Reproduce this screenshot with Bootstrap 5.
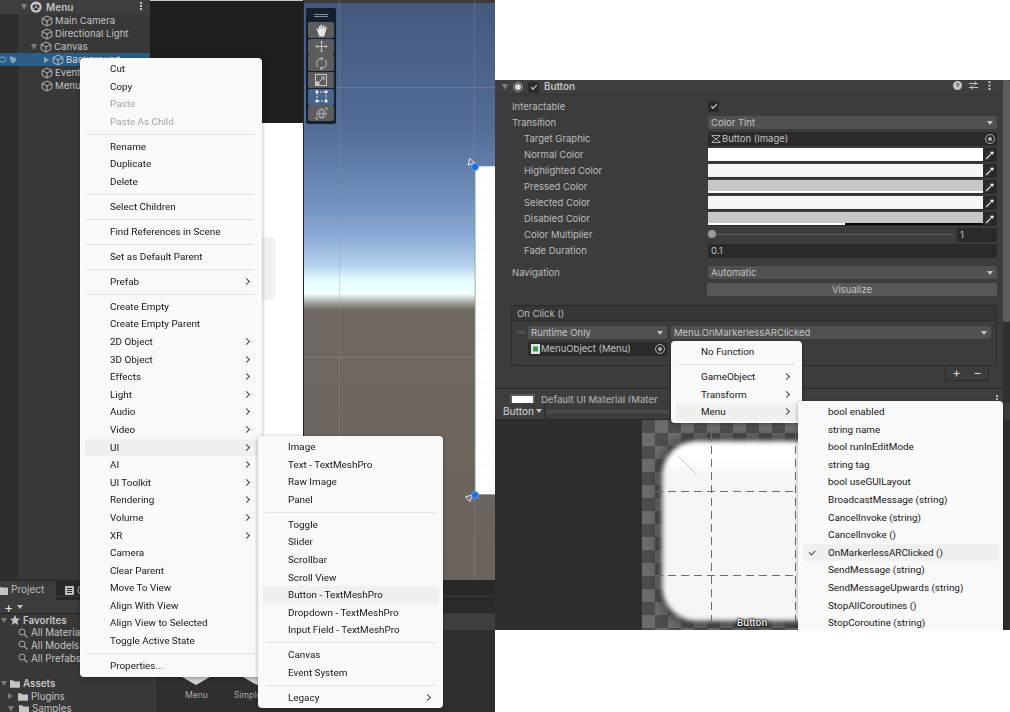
<!DOCTYPE html>
<html lang="en">
<head>
<meta charset="utf-8">
<title>Unity editor menus</title>
<link href="https://cdn.jsdelivr.net/npm/bootstrap@5.3.0/dist/css/bootstrap.min.css" rel="stylesheet">
<style>
html,body{margin:0;background:#fff;overflow:hidden}
.shot{width:1010px;height:712px;align-items:flex-start;filter:blur(.3px)}
.lpane{width:495px;height:712px;position:relative;overflow:hidden;background:#282828;font:9.6px/13px Inter,"Liberation Sans",sans-serif;color:#c4c4c4;flex:none}
.rpane{width:515px;height:550px;margin-top:80px;position:relative;overflow:hidden;background:#3c3c3c;font:9.5px/16px Inter,"Liberation Sans",sans-serif;color:#bdbdbd;flex:none}
.topzone{height:580px}
.hier{width:150px;background:linear-gradient(90deg,#2e2e2e 18px,#383838 18px);flex:none}
.hrow{height:13px;white-space:nowrap;align-items:center;display:flex}
.hrow svg{flex:none}
.hroot{height:14px;background:#3e3e3e;font-weight:600;padding-left:21px;position:relative;font-size:10px}
.hd1{padding-left:41px}.hcanvas{padding-left:31px}
.hsel{background:#2c5d87;color:#d8d8d8;padding-left:44px;position:relative}
.arr{width:0;height:0;border-left:3.5px solid transparent;border-right:3.5px solid transparent;border-top:6px solid #7b7b7b;margin-right:3px;flex:none}
.arrr{width:0;height:0;border-top:3.5px solid transparent;border-bottom:3.5px solid transparent;border-left:5px solid #8da3b5;margin-right:3px;flex:none}
.ic{width:12px;height:12px;margin-right:2px}
.kebab{position:absolute;right:8px;top:2px;width:2px;height:2px;background:#c4c4c4;box-shadow:0 3px #c4c4c4,0 6px #c4c4c4}
.eyeico{position:absolute;left:0;top:1px}
.gamecol{width:153px;flex:none;background:#fff}
.gamedark{height:123px;background:#1f1f1f;border-top:1px solid #c9c9c9}
.gamebody{height:457px;position:relative;background:#fff}
.ghost{position:absolute;left:112px;top:114px;width:13px;height:63px;background:#f2f2f2}
.scene{flex:1;position:relative;overflow:hidden;border-left:1px solid #222;background:linear-gradient(180deg,#43597e 0,#536d97 130px,#6f8fbc 200px,#8aa9d6 235px,#b5d1ee 265px,#e4fbff 280px,#f2ffff 294px,#a9a9a5 302px,#6f6761 310px,#6b635d 580px)}
.hline{position:absolute;left:0;right:0;height:1px;background:rgba(150,150,150,.4)}
.vline{position:absolute;top:0;bottom:0;width:1px;background:rgba(150,150,150,.3)}
.hl1{top:87px}.hl2{top:222px}.hl3{top:357px}.vl1{left:35px}.vl2{left:170px}
.topstrip{position:absolute;left:0;right:0;top:0;height:3px;background:#3a3a3a}
.canvasrect{position:absolute;left:171px;top:166px;width:30px;height:329px;background:#fff;border-left:1px solid #b5d9b0;border-top:1px solid #cfe6cc;border-bottom:1px solid #9c9c9c;background-image:linear-gradient(#f6f6f6 1px,transparent 1px);background-size:100% 13.5px}
.dot{position:absolute;width:8px;height:8px;border-radius:50%;background:#1c6fe0;border:1px solid #5fa2f4}
.dot1{left:167px;top:163px}.dot2{left:167px;top:491px}
.pin{position:absolute;width:8px;height:8px}
.pin1{left:163px;top:158px}.pin2{left:161px;top:494px}
.tbar{position:absolute;left:2px;top:8px;width:30px;height:116px;background:#142030;border-radius:2px;padding:3px 2px 0}
.tgrip{height:10px;position:relative;margin:0 0 1px}
.tgrip::before{content:"";position:absolute;left:6px;right:6px;top:3px;height:3px;border-top:1px solid #8a8f96;border-bottom:1px solid #8a8f96}
.tbtn{height:16px;margin-bottom:.7px;background:#5c5c5c;border-radius:2px;display:flex;align-items:center;justify-content:center}
.tbtn.on{background:#45658a}
.proj{height:132px}
.ptabs{height:20px;background:linear-gradient(180deg,#282828 16px,#3a3a3a 16px,#3a3a3a 17px,#282828 17px);align-items:flex-end}
.ptab{width:56px;height:19px;background:#3c3c3c;padding-left:11px;line-height:17px;position:relative;color:#bdbdbd;font-size:10px}
.ptab svg{position:absolute;left:-4px;top:4px}
.ptab2{margin-left:9px;height:19px;line-height:17px;display:flex;align-items:center;gap:3px;font-size:10px;color:#bdbdbd}
.ptool{height:13px;background:linear-gradient(90deg,#3c3c3c 158px,#2a2a2a 158px);line-height:12px;padding-left:4px;color:#e4e4e4;font-size:14px}
.pcaret{width:0;height:0;border-left:3px solid transparent;border-right:3px solid transparent;border-top:4px solid #c4c4c4;margin-left:4px}
.pbody{height:99px}
.ptree{width:158px;background:#383838;border-right:1px solid #262626;border-top:1px solid #262626;flex:none;overflow:hidden}
.tr{height:12.6px;display:flex;align-items:center;white-space:nowrap;font-size:9.8px}
.trh{padding-left:1px;font-weight:600}
.trc{padding-left:18px}
.trc svg,.trh svg{margin-right:3px;flex:none}
.trh .arr{margin-right:3px;border-left-width:3px;border-right-width:3px;border-top-width:5px}
.trc .arrr,.trc .arr{margin-left:-10px;margin-right:5px;flex:none}
.trc .arrr{border-left-color:#7b7b7b}
.trgap{height:13px}
.pfiles{flex:1;position:relative;background:#2f2f2f;overflow:hidden}
.pband{height:17px;background:#3e3e3e}
.thumb{position:absolute;top:64px;width:0;height:0;border-left:14px solid transparent;border-right:14px solid transparent;border-top:8px solid #d4d4d4}
.th1{left:24px}.th2{left:85px}
.tlabel{position:absolute;top:76px;font-size:8.600px;color:#a8a8a8}
.tl1{left:27px}.tl2{left:76px}
/* context menus */
.ctx{display:block;padding:2px 0;border:0;border-radius:4px;min-width:0;background:#f9f9f9;box-shadow:0 1px 4px rgba(0,0,0,.35);font:400 9.9px/17.6px Roboto,"Liberation Sans",sans-serif;color:#1e1e1e;overflow:hidden;isolation:isolate}
.ctx .dropdown-item{padding:0 30px;font-size:inherit;line-height:18.4px;height:17.6px;color:#161616;position:relative;white-space:nowrap;background:none}
.ctx .dropdown-item.dim{color:#a3a3a3}
.ctx .dropdown-item.hot::before{content:"";position:absolute;left:5px;right:4px;top:0;bottom:0;background:#f0f0f0;border-radius:3px;z-index:-1}
.ctx .dropdown-divider{margin:3.2px 7px;height:1px;opacity:1;border:0;background:#e3e3e3;box-shadow:0 0 1px #e3e3e3}
.sub::after{content:"";position:absolute;right:13px;top:6px;width:5px;height:5px;border-top:1px solid #444;border-right:1px solid #444;transform:rotate(45deg)}
.chk::after{content:"";position:absolute;left:11px;top:6px;width:6px;height:3.5px;border-left:1px solid #444;border-bottom:1px solid #444;transform:rotate(-45deg)}
.m1{left:80px;top:58px;width:182px;height:619px}
.m2{left:258px;top:436px;width:185px;height:272px}
.m3{left:176px;top:261px;width:131px;height:82px}
.m4{left:303px;top:321px;width:205px;height:240px}
/* inspector */
.ihead{height:15px;margin-bottom:1px;background:#3e3e3e;border-bottom:1px solid #333;display:flex;align-items:center;padding-left:7px;font-weight:600;color:#c4c4c4;position:relative;font-size:9.800px}
.ihead .arr{margin-right:5px}
.cbtn{width:11px;height:11px;background:#2a2a2a;border-radius:2px;margin:0 5px 0 5px;display:block}
.hbtns{position:absolute;right:16px;top:1px;display:flex;gap:7px;align-items:center}
.ibody{padding:2.5px 13px 0 17px}
.irow{height:16px;display:grid;grid-template-columns:196px 1fr;align-items:center}
.irow>.lbl{white-space:nowrap}
.in{padding-left:12px}
.irow.gp{margin-top:6px}
.irow.vz{margin-top:1px}
.pop{height:13px;background:#515151;border-radius:2px;line-height:13px;padding-left:3px;color:#c4c4c4;position:relative}
.pop::after{content:"";position:absolute;right:4px;top:5px;border-left:3px solid transparent;border-right:3px solid transparent;border-top:4px solid #c4c4c4}
.fld{height:14px;background:#2a2a2a;border-radius:2px;line-height:14px;padding-left:3px;color:#c4c4c4;position:relative;display:flex;align-items:center}
.fld svg{margin-right:1px;flex:none}
.tgt{position:absolute;right:2px;top:2px;width:10px;height:10px;border:1px solid #b0b0b0;border-radius:50%}
.tgt::after{content:"";position:absolute;left:2px;top:2px;width:4px;height:4px;background:#b0b0b0;border-radius:50%}
.colr{display:grid;grid-template-columns:1fr 14px;height:14px;background:#2a2a2a;align-items:center;border-radius:2px}
.swatch{height:13px;background:#fff;position:relative}
.sw2,.sw4{background:#f5f5f5}
.sw3,.sw5{background:#c8c8c8;border-bottom:2px solid #fff}
.sw5{border-bottom:0}
.sw5::after{content:"";position:absolute;left:0;right:0;bottom:0;height:2px;background:linear-gradient(90deg,#fff 50%,#0a0a0a 50%)}
.drop{display:flex;justify-content:center}
.slide{display:grid;grid-template-columns:1fr 40px;gap:3px;align-items:center;height:14px}
.track{height:1px;background:#5e5e5e;position:relative}
.track::before{content:"";position:absolute;left:0;top:-4px;width:8px;height:8px;border-radius:50%;background:#9a9a9a}
.chkbox{width:11px;height:11px;background:#2a2a2a;border-radius:2px;position:relative}
.cbm::after{content:"";position:absolute;left:2.5px;top:3px;width:6px;height:3px;border-left:1px solid #ddd;border-bottom:1px solid #ddd;transform:rotate(-45deg)}
.visbtn{height:13px;background:#585858;border-radius:2px;text-align:center;line-height:13px;color:#c4c4c4;margin-left:-1px}
.oc{margin:7px 13px 0 16px;height:61px;border:1px solid #2a2a2a;border-radius:3px;background:#3c3c3c;overflow:visible;position:relative}
.ochd{height:15px;background:#363636;padding-left:5px;line-height:15px;border-bottom:1px solid #2c2c2c}
.ocgrid{display:grid;grid-template-columns:139px 320px;gap:3px 4px;padding:5px 0 0 16px}
.ocgrip{position:absolute;left:5px;top:25px;width:9px;height:3px;border-top:1px solid #5a5a5a;border-bottom:1px solid #5a5a5a}
.pm{position:absolute;right:7px;bottom:-16px;width:44px;height:15px;background:#3c3c3c;border:1px solid #2a2a2a;border-top:0;border-radius:0 0 3px 3px;display:flex;justify-content:space-around;align-items:center;color:#d6d6d6;font-size:13px;line-height:13px}
.matrow{position:absolute;left:0;right:7px;top:308px;height:15px;background:#3e3e3e;border-top:1px solid #2a2a2a;padding-left:46px;line-height:22px;color:#a8a8a8;overflow:hidden;font-weight:500}
.matsw{position:absolute;left:15px;top:5px;width:25px;height:14px;background:#fff;border:2px solid #5b5b5b}
.matico{position:absolute;right:5px;top:6px;width:2px;height:2px;background:#bbb;box-shadow:0 3px #bbb,0 6px #bbb}
.prevtool{position:absolute;left:0;right:7px;top:323px;height:17px;background:#3c3c3c;border-bottom:1px solid #2a2a2a;display:flex;align-items:center;color:#c4c4c4}
.bname{width:50px;height:100%;background:#3e3e3e;border-right:1px solid #2a2a2a;padding-left:8px;font-weight:500;line-height:16px;flex:none;font-size:10px;white-space:nowrap}
.bname i{display:inline-block;border-left:3px solid transparent;border-right:3px solid transparent;border-top:4px solid #c4c4c4;margin-left:2px;vertical-align:2px}
.grip{width:122px;height:3px;margin-left:2px;border-top:1px solid #565656;border-bottom:1px solid #565656}
.prev{position:absolute;left:0;right:0;top:340px;bottom:0;background:#2e2e2e;overflow:hidden}
.chk2{position:absolute;left:147px;top:0;width:160px;height:210px;background:repeating-conic-gradient(#6b6b6b 0 25%,#4d4d4d 0 50%) 0 0/26px 26px}
.sprite{position:absolute;left:167px;top:21px;width:200px;height:180px;background:linear-gradient(180deg,#fff 0,#fff 20px,#f6f6f6 32px);border-radius:34px;box-shadow:0 0 7px 3px rgba(20,20,20,.8);filter:blur(2.5px)}
.dash{position:absolute;background-repeat:repeat}
.dv{width:1px;top:0;bottom:0;background-image:linear-gradient(#6c6c6c 62%,transparent 62%);background-size:1px 13px}
.dh{height:1px;left:147px;width:155px;background-image:linear-gradient(90deg,#6c6c6c 62%,transparent 62%);background-size:13px 1px}
.dv1{left:216px}.dv2{left:300px}.dh1{top:71px}.dh2{top:155px}
.diag{position:absolute;left:183px;top:36px}
.btxt{position:absolute;left:242px;top:195px;font-size:9.6px;color:#eee;font-weight:600;text-shadow:0 0 2px #000,0 0 2px #000,0 0 1px #000}
.rscroll{position:absolute;right:0;top:0;width:7px;height:323px;background:#303030}
.rthumb{width:7px;height:242px;background:#5d5d5d;border-radius:2px}
</style>
</head>
<body>
<svg width="0" height="0" class="position-absolute">
<symbol id="cube" viewBox="0 0 12 12"><path d="M6 1 10.8 3.4V8.6L6 11 1.2 8.6V3.4ZM1.2 3.4 6 6 10.8 3.4M6 6V11" fill="none" stroke="#c4c4c4" stroke-width=".9"/></symbol>
<symbol id="folder" viewBox="0 0 12 10"><path d="M0 1H4L5 2.500H12V10H0Z" fill="#c4c4c4"/></symbol>
<symbol id="loupe" viewBox="0 0 10 10"><circle cx="4" cy="4" r="3" fill="none" stroke="#aaa"/><path d="M6.200 6.200 9.500 9.500" stroke="#aaa" stroke-width="1.200"/></symbol>
<symbol id="drop" viewBox="0 0 10 10"><path d="M1 9 5.500 4.500" stroke="#ddd" stroke-width="1.300"/><path d="M5 3 7 1 9 3 7 5Z" fill="#e8e8e8"/></symbol>
</svg>
<div class="shot d-flex">
 <div class="lpane">
  <div class="topzone d-flex">
   <div class="hier">
    <div class="hrow hroot"><span class="arr"></span><svg class="ic me-1" viewBox="0 0 14 14"><circle cx="7" cy="7" r="6.500" fill="#d0d0d0"/><path d="M7 3 11 5.300V9.300L7 11.500 3 9.300V5.300Z" fill="#383838"/><path d="M7 1V7M7 7 2 10M7 7 12 10" stroke="#d0d0d0" stroke-width="1"/></svg>Menu<i class="kebab"></i></div>
    <div class="hrow hd1"><svg class="ic"><use href="#cube"/></svg>Main Camera</div>
    <div class="hrow hd1"><svg class="ic"><use href="#cube"/></svg>Directional Light</div>
    <div class="hrow hcanvas"><span class="arr"></span><svg class="ic"><use href="#cube"/></svg>Canvas</div>
    <div class="hrow hsel"><svg class="eyeico" width="18" height="11" viewBox="0 0 18 11"><ellipse cx="2" cy="5.500" rx="4" ry="2.500" fill="none" stroke="#7fa2bf"/><path d="M10 2 16 4V6L14 9H12L10 6Z" fill="#7fa2bf"/></svg><span class="arrr"></span><svg class="ic"><use href="#cube"/></svg>Background</div>
    <div class="hrow hd1"><svg class="ic"><use href="#cube"/></svg>Event</div>
    <div class="hrow hd1"><svg class="ic"><use href="#cube"/></svg>Menu</div>
   </div>
   <div class="gamecol">
    <div class="gamedark"></div>
    <div class="gamebody"><div class="ghost"></div></div>
   </div>
   <div class="scene">
    <div class="topstrip"></div>
    <div class="hline hl1"></div><div class="hline hl2"></div><div class="hline hl3"></div>
    <div class="vline vl1"></div><div class="vline vl2"></div>
    <div class="canvasrect"></div>
    <svg class="pin pin1" viewBox="0 0 8 8"><path d="M3 .5 7.500 5 1 7Z" fill="none" stroke="#eee"/></svg>
    <svg class="pin pin2" viewBox="0 0 8 8"><path d="M7 1 5 7.500 .5 3Z" fill="none" stroke="#eee"/></svg>
    <div class="dot dot1"></div><div class="dot dot2"></div>
    <div class="tbar">
     <div class="tgrip"></div>
     <div class="tbtn"><svg width="13" height="13" viewBox="0 0 12 12"><path d="M2 6 1 4.500 2 4 3.500 5.500V2L4.500 1.800 5 4.500V.8H6.500L7 4.500 7.800 1.200 9 1.600 8.600 5 10 2.500 11 3 9.500 8 8.500 11.500H4Z" fill="#e4e4e4"/></svg></div>
     <div class="tbtn"><svg width="13" height="13" viewBox="0 0 13 13" fill="none" stroke="#c2c2c2"><path d="M6.500 1V12M1 6.500H12"/><path d="M5 2.500 6.500 1 8 2.500M5 10.500 6.500 12 8 10.500M2.500 5 1 6.500 2.500 8M10.500 5 12 6.500 10.500 8"/></svg></div>
     <div class="tbtn"><svg width="13" height="13" viewBox="0 0 13 13" fill="none" stroke="#c2c2c2"><path d="M3 10A5 5 0 0 1 7 1.500M10 3A5 5 0 0 1 6 11.500M5.500 .5 8 1.500 6.500 3.500M7.500 9.500 5 11.500 7 12.500"/></svg></div>
     <div class="tbtn"><svg width="12" height="12" viewBox="0 0 12 12" fill="none" stroke="#c8c8c8"><rect x=".5" y=".5" width="11" height="11"/><path d="M4.500 7.500 9 3M6 3H9V6"/><rect x=".5" y="8" width="3.500" height="3.500" fill="#c8c8c8"/></svg></div>
     <div class="tbtn on"><svg width="13" height="13" viewBox="0 0 13 13"><path d="M2 2H11V11H2Z" fill="none" stroke="#e6e6e6" stroke-dasharray="2 1"/><path d="M.5.500H3V3H.5ZM10 .5H12.500V3H10ZM.5 10H3V12.500H.5ZM10 10H12.500V12.500H10Z" fill="#eee"/></svg></div>
     <div class="tbtn"><svg width="13" height="13" viewBox="0 0 13 13" fill="none" stroke="#c2c2c2" stroke-width=".8"><circle cx="6.500" cy="6.500" r="4.500"/><ellipse cx="6.500" cy="6.500" rx="2" ry="4.500"/><path d="M2 6.500H11"/><path d="M10 1H12V3M1 10V12H3" stroke-width="1"/></svg></div>
    </div>
   </div>
  </div>
  <div class="proj">
   <div class="ptabs d-flex"><div class="ptab"><svg width="12" height="10"><use href="#folder"/></svg>Project</div><div class="ptab2"><svg width="9" height="9" viewBox="0 0 9 9"><path d="M0 0H9V9H0Z" fill="#bdbdbd"/><path d="M2 2.500H7M2 4.500H7M2 6.500H7" stroke="#333"/></svg><span>C</span></div></div>
   <div class="ptool d-flex align-items-center"><span>+</span><span class="pcaret"></span></div>
   <div class="pbody d-flex">
    <div class="ptree">
     <div class="tr trh"><span class="arr"></span><svg width="10" height="10" viewBox="0 0 10 10"><path d="M5 0 6.500 3.500 10 3.800 7.300 6 8.200 10 5 7.900 1.800 10 2.700 6 0 3.800 3.500 3.500Z" fill="#c4c4c4"/></svg>Favorites</div>
     <div class="tr trc"><svg width="10" height="10"><use href="#loupe"/></svg>All Materia</div>
     <div class="tr trc"><svg width="10" height="10"><use href="#loupe"/></svg>All Models</div>
     <div class="tr trc"><svg width="10" height="10"><use href="#loupe"/></svg>All Prefabs</div>
     <div class="trgap"></div>
     <div class="tr trh"><span class="arr"></span><svg width="10" height="9"><use href="#folder"/></svg>Assets</div>
     <div class="tr trc"><span class="arrr"></span><svg width="10" height="9"><use href="#folder"/></svg>Plugins</div>
     <div class="tr trc"><span class="arr"></span><svg width="10" height="9"><use href="#folder"/></svg>Samples</div>
    </div>
    <div class="pfiles">
     <div class="pband"></div>
     <div class="thumb th1"></div><div class="thumb th2"></div>
     <span class="tlabel tl1">Menu</span><span class="tlabel tl2">Simple</span>
    </div>
   </div>
  </div>

  <div class="dropdown-menu show ctx m1">
   <a class="dropdown-item">Cut</a><a class="dropdown-item">Copy</a><a class="dropdown-item dim">Paste</a><a class="dropdown-item dim">Paste As Child</a>
   <hr class="dropdown-divider">
   <a class="dropdown-item">Rename</a><a class="dropdown-item">Duplicate</a><a class="dropdown-item">Delete</a>
   <hr class="dropdown-divider">
   <a class="dropdown-item">Select Children</a>
   <hr class="dropdown-divider">
   <a class="dropdown-item">Find References in Scene</a>
   <hr class="dropdown-divider">
   <a class="dropdown-item">Set as Default Parent</a>
   <hr class="dropdown-divider">
   <a class="dropdown-item sub">Prefab</a>
   <hr class="dropdown-divider">
   <a class="dropdown-item">Create Empty</a><a class="dropdown-item">Create Empty Parent</a>
   <a class="dropdown-item sub">2D Object</a><a class="dropdown-item sub">3D Object</a><a class="dropdown-item sub">Effects</a><a class="dropdown-item sub">Light</a><a class="dropdown-item sub">Audio</a><a class="dropdown-item sub">Video</a>
   <a class="dropdown-item sub hot">UI</a><a class="dropdown-item sub">AI</a><a class="dropdown-item sub">UI Toolkit</a><a class="dropdown-item sub">Rendering</a><a class="dropdown-item sub">Volume</a><a class="dropdown-item sub">XR</a>
   <a class="dropdown-item">Camera</a><a class="dropdown-item">Clear Parent</a><a class="dropdown-item">Move To View</a><a class="dropdown-item">Align With View</a><a class="dropdown-item">Align View to Selected</a><a class="dropdown-item">Toggle Active State</a>
   <hr class="dropdown-divider">
   <a class="dropdown-item">Properties...</a>
  </div>
  <div class="dropdown-menu show ctx m2">
   <a class="dropdown-item">Image</a><a class="dropdown-item">Text - TextMeshPro</a><a class="dropdown-item">Raw Image</a><a class="dropdown-item">Panel</a>
   <hr class="dropdown-divider">
   <a class="dropdown-item">Toggle</a><a class="dropdown-item">Slider</a><a class="dropdown-item">Scrollbar</a><a class="dropdown-item">Scroll View</a><a class="dropdown-item hot">Button - TextMeshPro</a><a class="dropdown-item">Dropdown - TextMeshPro</a><a class="dropdown-item">Input Field - TextMeshPro</a>
   <hr class="dropdown-divider">
   <a class="dropdown-item">Canvas</a><a class="dropdown-item">Event System</a>
   <hr class="dropdown-divider">
   <a class="dropdown-item sub">Legacy</a>
  </div>
 </div>

 <div class="rpane">
  <div class="ihead"><span class="arr"></span><svg width="10" height="10" viewBox="0 0 10 10"><circle cx="5" cy="5" r="4.500" fill="none" stroke="#999"/><circle cx="5" cy="5" r="3" fill="#ddd"/></svg><span class="cbtn chkbox cbm"></span>Button
   <span class="hbtns"><svg width="9" height="9" viewBox="0 0 9 9"><circle cx="4.500" cy="4.500" r="4.500" fill="#c4c4c4"/><path d="M3 3.500Q4.500 1.500 6 3.500 6 4.500 4.500 5V6" fill="none" stroke="#3c3c3c"/></svg><svg width="9" height="9" viewBox="0 0 9 9" stroke="#c4c4c4"><path d="M0 2.500H9M0 6.500H9M6 .5V4.500M3 4.500V8.500"/></svg><svg width="9" height="9" viewBox="0 0 9 9"><path d="M3.500 0H5.500V2H3.500ZM3.500 3.500H5.500V5.500H3.500ZM3.500 7H5.500V9H3.500Z" fill="#c4c4c4"/></svg></span>
  </div>
  <div class="ibody">
   <div class="irow"><span class="lbl">Interactable</span><span class="chkbox cbm"></span></div>
   <div class="irow"><span class="lbl">Transition</span><div class="pop">Color Tint</div></div>
   <div class="irow"><span class="lbl in">Target Graphic</span><div class="fld"><svg width="10" height="8" viewBox="0 0 10 8" stroke="#aaa" fill="none"><path d="M.5.500H9.500M.5 7.500H9.500M1 1 5 4 1 7M9 1 5 4 9 7"/></svg>Button (Image)<i class="tgt"></i></div></div>
   <div class="irow"><span class="lbl in">Normal Color</span><div class="colr"><div class="swatch"></div><div class="drop"><svg width="10" height="10"><use href="#drop"/></svg></div></div></div>
   <div class="irow"><span class="lbl in">Highlighted Color</span><div class="colr"><div class="swatch sw2"></div><div class="drop"><svg width="10" height="10"><use href="#drop"/></svg></div></div></div>
   <div class="irow"><span class="lbl in">Pressed Color</span><div class="colr"><div class="swatch sw3"></div><div class="drop"><svg width="10" height="10"><use href="#drop"/></svg></div></div></div>
   <div class="irow"><span class="lbl in">Selected Color</span><div class="colr"><div class="swatch sw4"></div><div class="drop"><svg width="10" height="10"><use href="#drop"/></svg></div></div></div>
   <div class="irow"><span class="lbl in">Disabled Color</span><div class="colr"><div class="swatch sw5"></div><div class="drop"><svg width="10" height="10"><use href="#drop"/></svg></div></div></div>
   <div class="irow"><span class="lbl in">Color Multiplier</span><div class="slide"><div class="track"></div><div class="fld">1</div></div></div>
   <div class="irow"><span class="lbl in">Fade Duration</span><div class="fld">0.1</div></div>
   <div class="irow gp"><span class="lbl">Navigation</span><div class="pop">Automatic</div></div>
   <div class="irow vz"><span></span><div class="visbtn">Visualize</div></div>
  </div>
  <div class="oc">
   <div class="ochd">On Click ()</div>
   <i class="ocgrip"></i>
   <div class="ocgrid">
    <div class="pop">Runtime Only</div><div class="pop">Menu.OnMarkerlessARClicked</div>
    <div class="fld"><svg width="9" height="10" viewBox="0 0 9 10"><path d="M0 0H9V10H0Z" fill="#dfe8df"/><path d="M2 2.500H7V7.500H2Z" fill="#3f9a56"/></svg>MenuObject (Menu)<i class="tgt"></i></div><div></div>
   </div>
   <div class="pm"><span>+</span><span>−</span></div>
  </div>
  <div class="rscroll"><div class="rthumb"></div></div>
  <div class="matrow"><i class="matsw"></i>Default UI Material (Mater<i class="matico"></i></div>
  <div class="prevtool"><div class="bname">Button<i></i></div><div class="grip"></div></div>
  <div class="prev">
   <div class="chk2"></div>
   <div class="sprite"></div>
   <svg class="diag" width="20" height="20" viewBox="0 0 20 20"><path d="M0 0 19 19" stroke="#c8c8c8"/></svg>
   <div class="dash dv dv1"></div><div class="dash dv dv2"></div>
   <div class="dash dh dh1"></div><div class="dash dh dh2"></div>
   <div class="btxt">Button</div>
  </div>
  <div class="dropdown-menu show ctx m3">
   <a class="dropdown-item">No Function</a>
   <hr class="dropdown-divider">
   <a class="dropdown-item sub">GameObject</a><a class="dropdown-item sub">Transform</a><a class="dropdown-item sub hot">Menu</a>
  </div>
  <div class="dropdown-menu show ctx m4">
   <a class="dropdown-item">bool enabled</a><a class="dropdown-item">string name</a><a class="dropdown-item">bool runInEditMode</a><a class="dropdown-item">string tag</a><a class="dropdown-item">bool useGUILayout</a><a class="dropdown-item">BroadcastMessage (string)</a><a class="dropdown-item">CancelInvoke (string)</a><a class="dropdown-item">CancelInvoke ()</a><a class="dropdown-item hot chk">OnMarkerlessARClicked ()</a><a class="dropdown-item">SendMessage (string)</a><a class="dropdown-item">SendMessageUpwards (string)</a><a class="dropdown-item">StopAllCoroutines ()</a><a class="dropdown-item">StopCoroutine (string)</a>
  </div>
 </div>
</div>
<script src="https://cdn.jsdelivr.net/npm/bootstrap@5.3.0/dist/js/bootstrap.bundle.min.js"></script>
</body>
</html>
